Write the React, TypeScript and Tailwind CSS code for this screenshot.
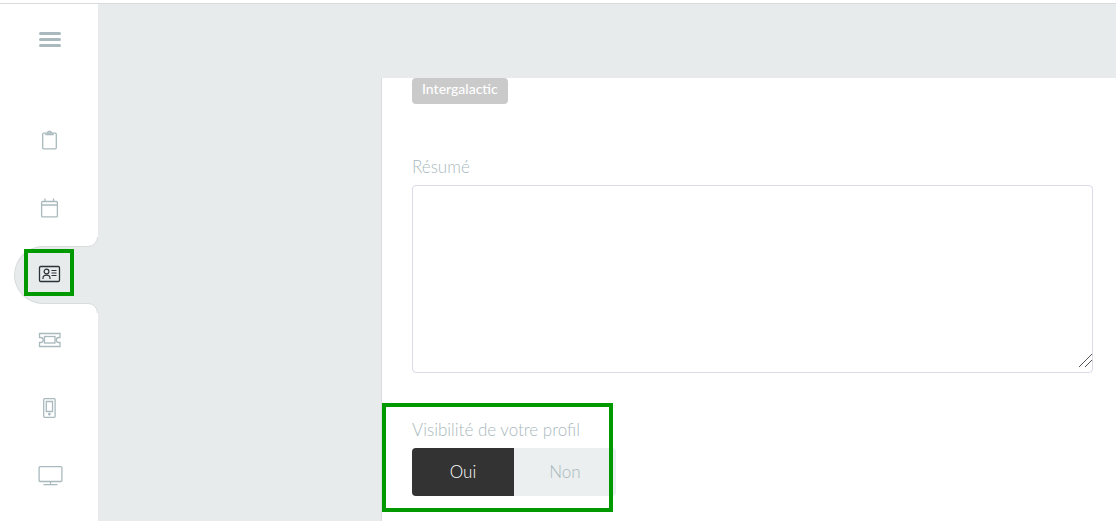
import { useState, type ReactNode } from "react";

// Outline icons of the side menu, all drawn on a 28px grid
const icon = (children: ReactNode) => (
  <svg width="28" height="28" viewBox="0 0 28 28" fill="none" stroke="currentColor" strokeWidth="1.3" aria-hidden="true">
    {children}
  </svg>
);

const menu = [
  {
    label: "Programme",
    icon: icon(
      <>
        <rect x="6.7" y="6.2" width="13.6" height="15.6" rx="1" />
        <path d="M10 6.5v1h7v-1M11.6 6V5.2h.9a1 1 0 0 1 2 0h.9V6" />
      </>
    ),
  },
  {
    label: "Agenda",
    icon: icon(
      <>
        <rect x="5.6" y="7.5" width="15.8" height="15.4" rx="1" />
        <path d="M5.6 11h15.8M9 4.5v3M17.5 4.5v3" />
      </>
    ),
  },
  {
    label: "Profil",
    icon: icon(
      <>
        <rect x="3.5" y="5.5" width="20" height="15" rx="1.2" strokeWidth="1.3" />
        <circle cx="10.5" cy="10.5" r="2.4" strokeWidth="1.2" />
        <path d="M7 18v-.8a3.5 3 0 0 1 7 0v.8" strokeWidth="1.2" />
        <path d="M15.5 9.5h5M15.5 12h5M15.5 14.5h5" strokeWidth="1" />
      </>
    ),
  },
  {
    label: "Billets",
    icon: icon(
      <>
        <path d="M3.5 5.5h20.5v4h-1.2a1.9 1.9 0 0 0 0 5h1.2v4H3.5v-4h1.2a1.9 1.9 0 0 0 0-5H3.5z" />
        <rect x="8.5" y="8.5" width="10.5" height="6.5" />
      </>
    ),
  },
  {
    label: "Mobile",
    icon: icon(
      <>
        <rect x="7.7" y="3.7" width="11.4" height="18.6" rx="1" />
        <path d="M10.3 6.5h6.2v10h-6.2z" />
        <circle cx="13.4" cy="19.2" r=".7" fill="currentColor" />
      </>
    ),
  },
  {
    label: "Écran",
    icon: icon(
      <>
        <rect x="3.1" y="4.7" width="22.8" height="14.8" rx="1" />
        <path d="M14.5 19.5v3M7.5 22.7h14" />
      </>
    ),
  },
];

// Concave corner joining the active tab to the page background
function TabCorner({ className }: { className: string }) {
  return (
    <svg className={className} width="10" height="10" viewBox="0 0 10 10" fill="none" aria-hidden="true">
      <path d="M0 10V9.5A9.5 9.5 0 0 0 9.5 0H10V10z" fill="#e7ebeb" />
      <path d="M0 9.5A9.5 9.5 0 0 0 9.5 0" stroke="#d8dcdc" />
    </svg>
  );
}

function Sidebar() {
  return (
    <nav className="w-[98px] shrink-0 bg-white pt-5">
      <button type="button" aria-label="Menu" className="ml-[30px] flex h-[30px] w-10 flex-col items-center justify-center gap-[3px]">
        <span className="h-[3px] w-[22px] rounded-xs bg-[#a9b9bd]" />
        <span className="h-[3px] w-[22px] rounded-xs bg-[#a9b9bd]" />
        <span className="h-[3px] w-[22px] rounded-xs bg-[#a9b9bd]" />
      </button>
      <ul className="mt-[58px] flex flex-col gap-[9px]">
        {menu.map((item) => {
          const active = item.label === "Profil";
          return (
            <li key={item.label} className="relative pl-[14px]">
              <a
                href="#"
                aria-label={item.label}
                aria-current={active ? "page" : undefined}
                className={
                  active
                    ? "flex h-[58px] items-center rounded-l-full border border-r-0 border-[#d8dcdc] bg-[#e7ebeb] pl-[21px] text-[#2b3338]"
                    : "flex h-[58px] items-center pl-[22px] text-[#a9b9bd]"
                }
              >
                {item.icon}
              </a>
              {active && (
                <>
                  <TabCorner className="absolute right-0 -top-[9px]" />
                  <TabCorner className="absolute right-0 -bottom-[9px] -scale-y-100" />
                  <span className="pointer-events-none absolute top-[3px] left-6 h-[47px] w-[50px] border-4 border-[#009900]" />
                </>
              )}
            </li>
          );
        })}
      </ul>
    </nav>
  );
}

function VisibilityToggle() {
  const [visible, setVisible] = useState("Oui");
  return (
    <div className="relative mt-[45px] w-[204px]">
      <fieldset>
        <legend className="text-[17px] leading-6 whitespace-nowrap">Visibilité de votre profil</legend>
        <div className="mt-[6px] flex h-12 overflow-hidden rounded bg-[#ebefef]">
          {["Oui", "Non"].map((value) => (
            <label
              key={value}
              className="flex flex-1 cursor-pointer items-center justify-center text-[17px] leading-6 has-checked:bg-[#333333] has-checked:text-white"
            >
              <input
                type="radio"
                name="visibility"
                value={value}
                checked={visible === value}
                onChange={() => setVisible(value)}
                className="sr-only"
              />
              {value}
            </label>
          ))}
        </div>
      </fieldset>
      <span className="pointer-events-none absolute -top-[15px] -bottom-4 -left-[30px] right-[3px] border-4 border-[#009900]" />
    </div>
  );
}

export default function App() {
  return (
    <div className="flex min-h-screen flex-col bg-white font-['Lato',sans-serif] font-light text-[#a9b9bd]">
      <div className="h-1 border-b border-[#d8dcdc]" />
      <div className="flex flex-1 bg-[#e7ebeb]">
        <Sidebar />
        <main className="flex flex-1 flex-col pt-[74px] pl-[283px]">
          <form className="flex-1 overflow-hidden border-l border-[#d8dcdc] bg-white pr-[23px] pl-[30px]">
            <div className="flex">
              <span className="rounded bg-[#cacaca] px-[10px] pt-px pb-[5px] text-sm leading-5 font-medium text-white">
                Intergalactic
              </span>
            </div>
            <label htmlFor="resume" className="mt-[51px] block text-[17px] leading-6">
              Résumé
            </label>
            <div className="relative mt-[6px]">
              <textarea
                id="resume"
                className="block h-[188px] w-full rounded border border-[#d9dbe9] bg-white px-3 py-2 text-[17px] text-[#333333] outline-none [&::-webkit-resizer]:bg-transparent"
              />
              <svg
                className="pointer-events-none absolute right-px bottom-[6px]"
                width="13"
                height="13"
                viewBox="0 0 13 13"
                stroke="#555555"
                aria-hidden="true"
              >
                <path d="M0 13L13 0M6 13L13 6" />
              </svg>
            </div>
            <VisibilityToggle />
          </form>
        </main>
      </div>
    </div>
  );
}
